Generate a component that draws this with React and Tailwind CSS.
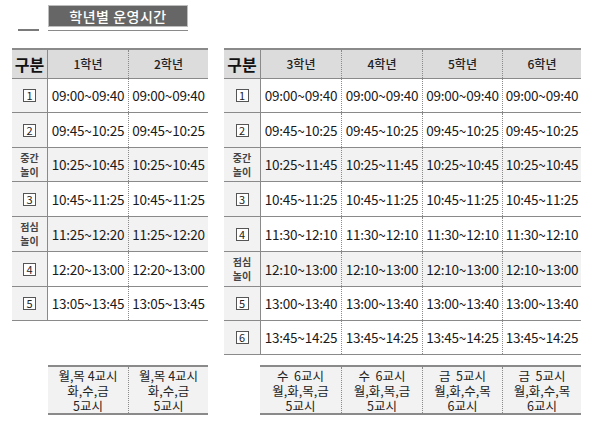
import React from "react";

const FONT = { fontFamily: '"Noto Sans CJK KR", "Noto Sans", sans-serif' };

function Box({ n }) {
  return (
    <span className="inline-flex items-center justify-center w-[13px] h-[13px] border border-[#555] text-[11px] leading-none text-[#222] bg-white">
      {n}
    </span>
  );
}

function Label({ r }) {
  if (r.label) {
    return (
      <span className="text-[10px] leading-[14px] font-bold text-[#444] text-center">
        {r.label[0]}
        <br />
        {r.label[1]}
      </span>
    );
  }
  return <Box n={r.n} />;
}

function Table({ firstW, colWs, grades, rows }) {
  return (
    <div className="flex flex-col">
      <div className="flex h-[31px] border-t-2 border-b border-[#8a8a8a] bg-[#dcdcdc]">
        <div
          className="flex items-center justify-center border-r border-[#8a8a8a] text-[16px] font-bold text-[#111]"
          style={{ width: firstW }}
        >
          구분
        </div>
        {grades.map((g, i) => (
          <div
            key={g}
            className={
              "flex items-center justify-center text-[12px] font-medium text-[#222] " +
              (i > 0 ? "border-l border-dotted border-[#8a8a8a]" : "")
            }
            style={{ width: colWs[i] }}
          >
            {g}
          </div>
        ))}
      </div>
      {rows.map((r, ri) => (
        <div
          key={ri}
          className={
            "flex border-b border-[#8a8a8a] " + (r.label ? "bg-[#f2f2f2]" : "bg-white")
          }
          style={{ height: r.h }}
        >
          <div
            className="flex items-center justify-center border-r border-[#8a8a8a] bg-[#f2f2f2]"
            style={{ width: firstW }}
          >
            <Label r={r} />
          </div>
          {r.t.map((t, i) => (
            <div
              key={i}
              className={
                "flex items-center justify-center text-[13.5px] text-[#1a1a1a] tracking-[-0.2px] " +
                (i > 0 ? "border-l border-dotted border-[#8a8a8a]" : "")
              }
              style={{ width: colWs[i] }}
            >
              {t}
            </div>
          ))}
        </div>
      ))}
    </div>
  );
}

function Footer({ ml, colWs, items }) {
  return (
    <div className="flex h-[50px] border-t-2 border-b-2 border-[#8a8a8a] bg-[#f2f2f2]" style={{ marginLeft: ml }}>
      {items.map((it, i) => (
        <div
          key={i}
          className={
            "flex flex-col items-center justify-center text-[12.5px] leading-[15px] text-[#222] " +
            (i > 0 ? "border-l border-dotted border-[#8a8a8a]" : "")
          }
          style={{ width: colWs[i] }}
        >
          {it.map((l, j) => (
            <span key={j} className="block h-[15px] whitespace-pre">{l}</span>
          ))}
        </div>
      ))}
    </div>
  );
}

export default function App() {
  const leftRows = [
    { n: 1, h: 34, t: ["09:00~09:40", "09:00~09:40"] },
    { n: 2, h: 35, t: ["09:45~10:25", "09:45~10:25"] },
    { label: ["중간", "놀이"], h: 34, t: ["10:25~10:45", "10:25~10:45"] },
    { n: 3, h: 35, t: ["10:45~11:25", "10:45~11:25"] },
    { label: ["점심", "놀이"], h: 35, t: ["11:25~12:20", "11:25~12:20"] },
    { n: 4, h: 35, t: ["12:20~13:00", "12:20~13:00"] },
    { n: 5, h: 34, t: ["13:05~13:45", "13:05~13:45"] },
  ];
  const r4 = (a) => [a, a, a, a];
  const rightRows = [
    { n: 1, h: 34, t: r4("09:00~09:40") },
    { n: 2, h: 35, t: r4("09:45~10:25") },
    { label: ["중간", "놀이"], h: 34, t: ["10:25~11:45", "10:25~11:45", "10:25~10:45", "10:25~10:45"] },
    { n: 3, h: 35, t: r4("10:45~11:25") },
    { n: 4, h: 35, t: r4("11:30~12:10") },
    { label: ["점심", "놀이"], h: 35, t: r4("12:10~13:00") },
    { n: 5, h: 34, t: r4("13:00~13:40") },
    { n: 6, h: 34, t: r4("13:45~14:25") },
  ];
  return (
    <div className="w-[592px] h-[425px] bg-white relative" style={FONT}>
      <div className="h-[48px] flex items-start pt-[5px]">
        <div className="w-[21px] h-[2px] bg-[#7a7a7a] ml-[18px] mt-[24px]" />
        <div className="ml-[9px] flex flex-col">
          <div className="w-[140px] h-[22px] bg-[#666666] border border-[#bdbdbd] flex items-center justify-center text-white text-[14px] font-medium tracking-[0.5px]">
            학년별 운영시간
          </div>
          <div className="w-[140px] h-[1px] bg-[#8a8a8a] mt-[3px]" />
        </div>
      </div>
      <div className="grid grid-cols-[196px_357px] gap-x-[16px] gap-y-[10px] pl-[12px]">
        <div className="self-start">
          <Table firstW={36} colWs={[80, 80]} grades={["1학년", "2학년"]} rows={leftRows} />
        </div>
        <div>
          <Table firstW={37} colWs={[80, 81, 80, 79]} grades={["3학년", "4학년", "5학년", "6학년"]} rows={rightRows} />
        </div>
        <Footer
          ml={36}
          colWs={[80, 80]}
          items={[
            ["월,목 4교시", "화,수,금", "5교시"],
            ["월,목 4교시", "화,수,금", "5교시"],
          ]}
        />
        <Footer
          ml={36}
          colWs={[81, 81, 80, 79]}
          items={[
            ["수  6교시", "월,화,목,금", "5교시"],
            ["수  6교시", "월,화,목,금", "5교시"],
            ["금  5교시", "월,화,수,목", "6교시"],
            ["금  5교시", "월,화,수,목", "6교시"],
          ]}
        />
      </div>
    </div>
  );
}
